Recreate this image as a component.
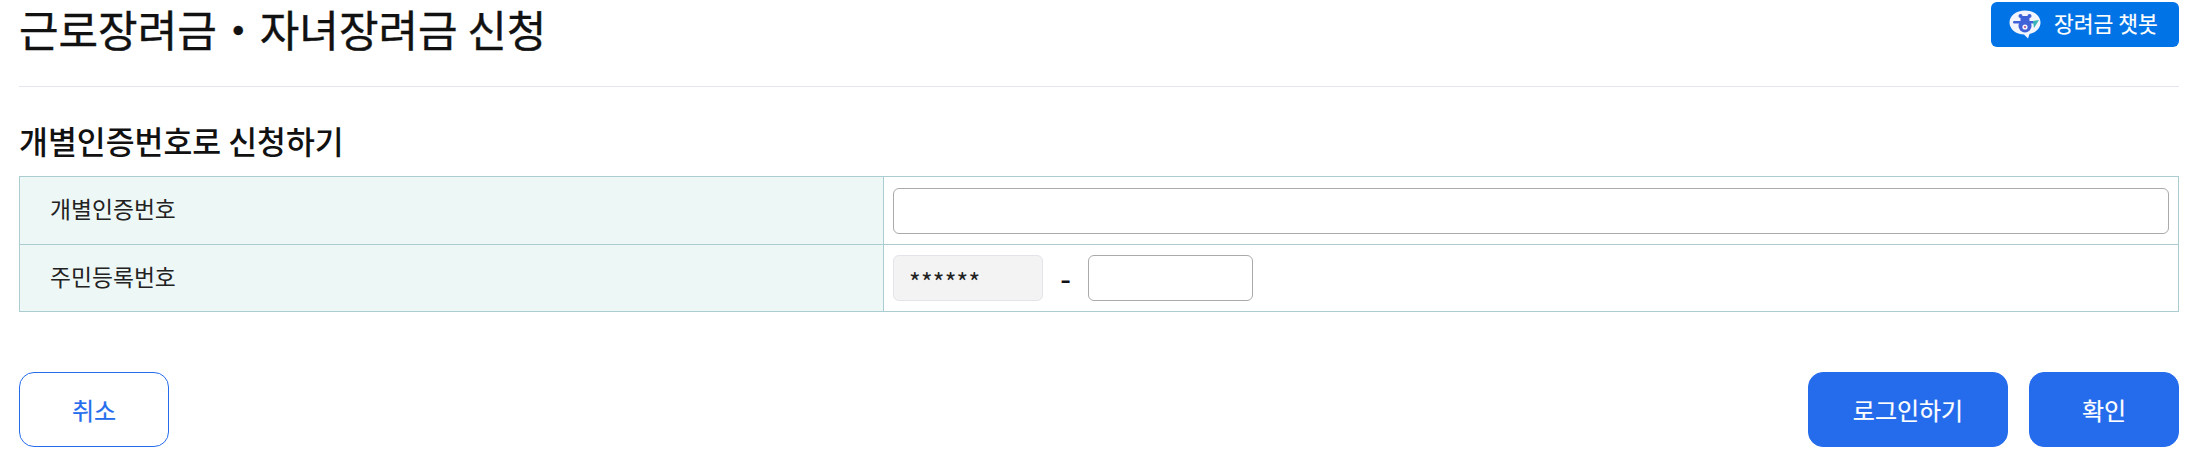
<script>
  const rows = ['개별인증번호', '주민등록번호'];
</script>

<main class="page">
  <header class="head">
    <h1>근로장려금・자녀장려금 신청</h1>
    <button class="chat">
      <svg width="32" height="29" viewBox="0 0 32 29" aria-hidden="true">
        <path d="M16 0.500C7 0.500 0.500 5.500 0.500 12.500C0.500 19 7 24.500 15 24.500L19 28.500L20.500 24C27 22.500 31.500 18 31.500 12.500C31.500 5.500 25 0.500 16 0.500Z" fill="#f2f5fd"/>
        <circle cx="16" cy="16" r="6.500" fill="#3f62d8"/>
        <circle cx="11.500" cy="6" r="2" fill="#3f62d8"/>
        <circle cx="20.500" cy="6" r="2" fill="#3f62d8"/>
        <rect x="11.500" y="6" width="9" height="5" fill="#3f62d8"/>
        <rect x="4" y="11" width="21" height="2.500" rx="1.200" fill="#3f62d8"/>
        <path d="M24 11L30 10L25 18Z" fill="#35b5b5"/>
        <circle cx="16" cy="17" r="2.600" fill="#f2f5fd"/>
        <circle cx="16" cy="17" r="1.100" fill="#c24a8c"/>
      </svg>
      <span>장려금 챗봇</span>
    </button>
  </header>

  <h2>개별인증번호로 신청하기</h2>

  <table>
    <tbody>
      <tr>
        <th>{rows[0]}</th>
        <td><input class="field wide" type="text" aria-label={rows[0]} /></td>
      </tr>
      <tr>
        <th>{rows[1]}</th>
        <td>
          <div class="rrn">
            <div class="masked">******</div>
            <span class="dash">-</span>
            <input class="field short" type="text" aria-label={rows[1]} />
          </div>
        </td>
      </tr>
    </tbody>
  </table>

  <footer class="actions">
    <button class="btn ghost">취소</button>
    <div class="right">
      <button class="btn solid login">로그인하기</button>
      <button class="btn solid">확인</button>
    </div>
  </footer>
</main>

<style>
  :global(body) {
    margin: 0;
    background: #fff;
  }
  .page {
    box-sizing: border-box;
    width: 2205px;
    height: 465px;
    padding: 2px 26px 0 19px;
    overflow: hidden;
    font-family: "Noto Sans CJK KR", "Noto Sans", sans-serif;
    color: #111;
  }
  .head {
    display: flex;
    justify-content: space-between;
    align-items: flex-start;
    height: 84px;
    border-bottom: 1px solid #e5e5ef;
  }
  h1 {
    margin: 0;
    font-size: 43px;
    line-height: 53px;
    font-weight: 400;
    -webkit-text-stroke: 0.400px #111;
  }
  .chat {
    display: flex;
    align-items: center;
    gap: 13px;
    width: 188px;
    height: 45px;
    padding: 0 0 0 18px;
    border: 0;
    border-radius: 6px;
    background: #0073e6;
    color: #fff;
    font: 400 21.500px/1 "Noto Sans CJK KR", sans-serif;
  }
  .chat svg {
    flex: none;
  }
  .chat span {
    padding-bottom: 3px;
    -webkit-text-stroke: 0.200px #fff;
  }
  h2 {
    margin: 33px 0 0;
    height: 56px;
    font-size: 31.400px;
    line-height: 42px;
    font-weight: 500;
  }
  table {
    width: 100%;
    table-layout: fixed;
    border-collapse: collapse;
  }
  th,
  td {
    height: 68px;
    padding: 0;
    border: 1px solid #abcdd2;
    box-sizing: border-box;
  }
  tr + tr th,
  tr + tr td {
    height: 67px;
  }
  th {
    width: 864px;
    padding: 0 0 4px 30px;
    background: #edf7f6;
    text-align: left;
    font-size: 22.800px;
    font-weight: 400;
    color: #222;
  }
  td {
    padding: 0 9px;
  }
  .field,
  .masked {
    display: block;
    box-sizing: border-box;
    height: 46px;
    border-radius: 6px;
    background: #fff;
    border: 1px solid #aaa;
    padding: 0;
    outline: 0;
  }
  .wide {
    width: 100%;
  }
  .rrn {
    display: flex;
    align-items: center;
  }
  .masked {
    width: 150px;
    padding-left: 15px;
    background: #f3f3f3;
    border-color: #e3e3ea;
    font: 400 25px/50px "Noto Sans CJK KR", sans-serif;
    letter-spacing: 0.200px;
    color: #222;
  }
  .dash {
    width: 45px;
    padding-bottom: 2px;
    text-align: center;
    font-size: 30px;
    font-weight: 500;
  }
  .short {
    width: 165px;
  }
  .actions {
    display: flex;
    justify-content: space-between;
    margin-top: 60px;
  }
  .right {
    display: flex;
    gap: 21px;
  }
  .btn {
    box-sizing: border-box;
    width: 150px;
    height: 75px;
    border-radius: 15px;
    font: 400 24px/1 "Noto Sans CJK KR", sans-serif;
    border: 1px solid #256ced;
    padding: 0;
    -webkit-text-stroke: 0.200px currentColor;
  }
  .ghost {
    background: #fff;
    color: #256ced;
  }
  .solid {
    background: #256ced;
    color: #fff;
  }
  .login {
    width: 200px;
  }
</style>
